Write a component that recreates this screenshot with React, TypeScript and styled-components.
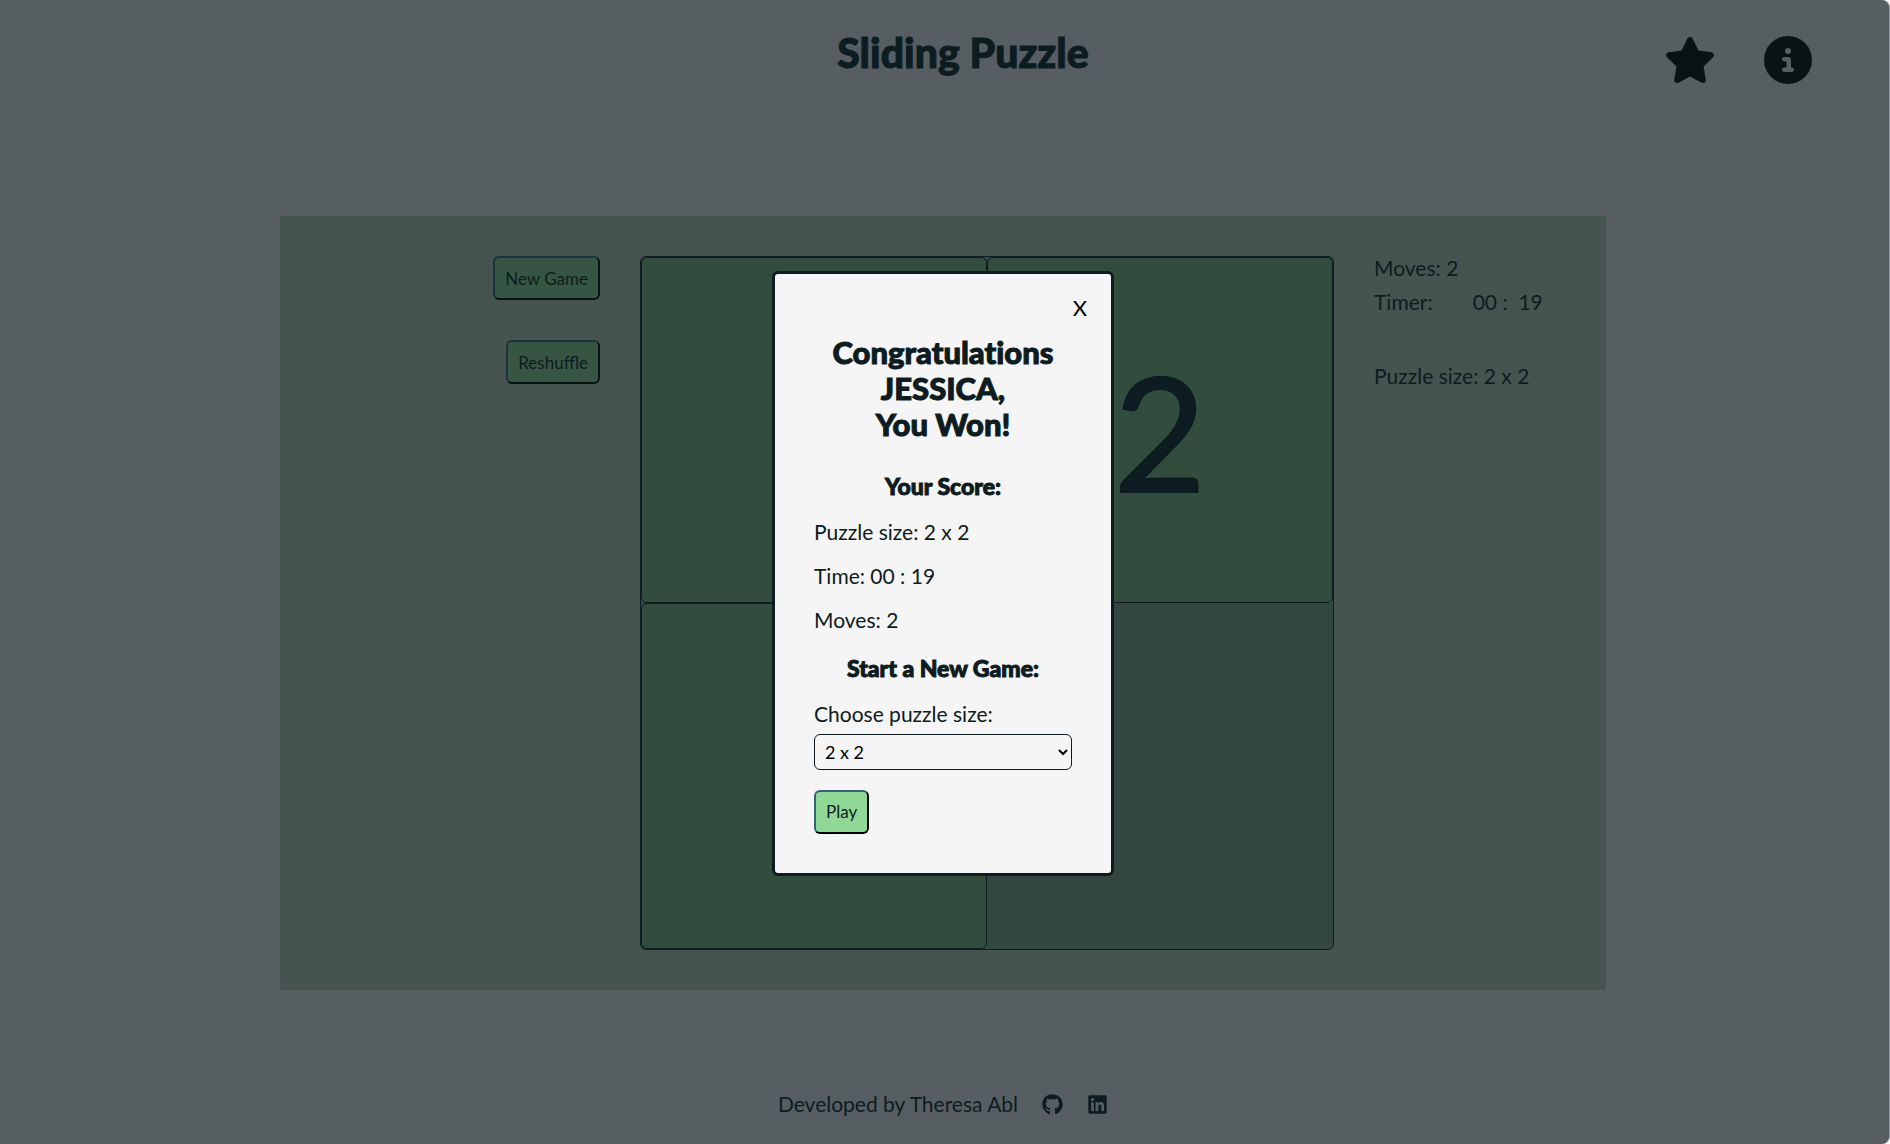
import React, { useState } from "react";
import styled, { createGlobalStyle } from "styled-components";
import { FaGithub, FaLinkedin } from "react-icons/fa";
import { FaStar, FaCircleInfo } from "react-icons/fa6";

const ink = "#0d1c20";
const Global = createGlobalStyle`
  * { box-sizing: border-box; }
  html { background: #fff; }
  body { margin: 0; font-family: Lato, "Open Sans", sans-serif; font-size: 21px; line-height: 24px; color: ${ink}; }
  h1, h2, h3, p { margin: 0; }
  h1, h2, h3 { font-weight: 900; font-variant-ligatures: none; -webkit-text-stroke: 1px ${ink}; }
  button, select { font-family: inherit; }
`;
const Page = styled.div`
  min-height: 100vh;
  padding-right: 3px;
  background: #565e61;
  border-right: 1px solid #89979b;
  border-radius: 0 8px 8px 0;
  display: flex;
  flex-direction: column;
  justify-content: space-between;
  align-items: center;
`;
const Header = styled.header`
  width: 100%;
  display: grid;
  grid-template-columns: 1fr auto 1fr;
  padding: 28px 74px 28px 114px;
`;
const Title = styled.h1`
  grid-column: 2;
  font-size: 41px;
  line-height: 50px;
`;
const HeaderActions = styled.nav`
  display: flex;
  justify-content: flex-end;
  align-items: center;
  gap: 48px;
  padding-top: 6px;
`;
const IconButton = styled.button<{ $size: number }>`
  display: flex;
  padding: 0;
  border: 0;
  background: none;
  color: #091315;

  svg {
    width: auto;
    height: ${(p) => p.$size}px;
  }
`;
const Board = styled.main`
  width: 1326px;
  max-width: 100%;
  padding: 40px;
  background: #45544e;
  display: grid;
  grid-template-columns: 1fr auto 192px;
  column-gap: 40px;
`;
const Controls = styled.div`
  display: flex;
  flex-direction: column;
  align-items: flex-end;
  gap: 40px;
`;
const Button = styled.button<{ $bright?: boolean }>`
  height: 44px;
  padding: 0 10px;
  border: 2px solid;
  border-color: ${(p) => (p.$bright ? "#2f6573 #000 #000 #2f6573" : "#19343a #091315 #091315 #19343a")};
  border-radius: 6px;
  background: ${(p) => (p.$bright ? "#90d896" : "#365643")};
  color: ${ink};
  font-size: 17px;
`;
const Puzzle = styled.div`
  display: grid;
  grid-template-columns: repeat(2, 346px);
  grid-auto-rows: 346px;
  border: 1px solid ${ink};
  border-radius: 6px;
  background: #344640;
`;
const Tile = styled.button`
  border: 1px solid ${ink};
  border-radius: 6px;
  background: #324d3e;
  color: ${ink};
  font-size: 160px;
  line-height: 200px;
  -webkit-text-stroke: 2px ${ink};
  padding: 0;
`;
const Stats = styled.div`
  display: flex;
  flex-direction: column;
  gap: 10px;
  white-space: nowrap;
`;
const Timer = styled.p`
  display: flex;
  margin-bottom: 40px;
`;
const Clock = styled.span`
  padding-left: 40px;
  white-space: pre;
`;
const Footer = styled.footer`
  display: flex;
  align-items: center;
  gap: 24px;
  padding-bottom: 28px;
`;
const FooterLink = styled.a`
  display: flex;
  color: ${ink};
`;
const Overlay = styled.div`
  position: fixed;
  inset: 0;
  padding: 2px 4px 0 0;
  display: flex;
  align-items: center;
  justify-content: center;
`;
const Dialog = styled.section`
  width: 342px;
  padding: 18px 39px 39px;
  border: 3px solid ${ink};
  border-radius: 6px;
  background: #f5f5f5;
  display: flex;
  flex-direction: column;
`;
const Close = styled.button`
  align-self: flex-end;
  width: 32px;
  height: 32px;
  margin-right: -24px;
  padding: 0;
  border: 0;
  background: none;
  color: #000;
  font-size: 22px;
`;
const Congrats = styled.h2`
  margin: 10px 0 28px;
  font-size: 31px;
  line-height: 36px;
  text-align: center;
`;
const Subheading = styled.h3`
  margin: 2px 0 20px;
  font-size: 23px;
  line-height: 28px;
  text-align: center;
`;
const Score = styled.p`
  margin-bottom: 20px;
`;
const Select = styled.select`
  height: 36px;
  margin: 8px 0 20px;
  padding: 0 6px;
  border: 1px solid ${ink};
  border-radius: 6px;
  background: #f5f5f5;
  color: #000;
  font-size: 18px;
`;
const PlayRow = styled.div`
  display: flex;
`;

export default function App() {
  const [size, setSize] = useState("2");
  return (
    <>
      <Global />
      <Page>
        <Header>
          <Title>Sliding Puzzle</Title>
          <HeaderActions>
            <IconButton $size={52} aria-label="High scores"><FaStar /></IconButton>
            <IconButton $size={48} aria-label="Information"><FaCircleInfo /></IconButton>
          </HeaderActions>
        </Header>
        <Board>
          <Controls>
            <Button>New Game</Button>
            <Button>Reshuffle</Button>
          </Controls>
          <Puzzle>
            {[1, 2, 3].map((n) => <Tile key={n}>{n}</Tile>)}
          </Puzzle>
          <Stats>
            <p>Moves: 2</p>
            <Timer>Timer:<Clock>{"00 :  19"}</Clock></Timer>
            <p>Puzzle size: 2 x 2</p>
          </Stats>
        </Board>
        <Footer>
          <span>Developed by Theresa Abl</span>
          <FooterLink href="#github" aria-label="GitHub"><FaGithub /></FooterLink>
          <FooterLink href="#linkedin" aria-label="LinkedIn"><FaLinkedin /></FooterLink>
        </Footer>
      </Page>
      <Overlay>
        <Dialog role="dialog" aria-labelledby="won">
          <Close aria-label="Close">X</Close>
          <Congrats id="won">Congratulations<br />JESSICA,<br />You Won!</Congrats>
          <Subheading>Your Score:</Subheading>
          <Score>Puzzle size: 2 x 2</Score>
          <Score>Time: 00 : 19</Score>
          <Score>Moves: 2</Score>
          <Subheading>Start a New Game:</Subheading>
          <label htmlFor="size">Choose puzzle size:</label>
          <Select id="size" value={size} onChange={(e) => setSize(e.target.value)}>
            <option value="2">2 x 2</option>
            <option value="3">3 x 3</option>
            <option value="4">4 x 4</option>
          </Select>
          <PlayRow><Button $bright>Play</Button></PlayRow>
        </Dialog>
      </Overlay>
    </>
  );
}
